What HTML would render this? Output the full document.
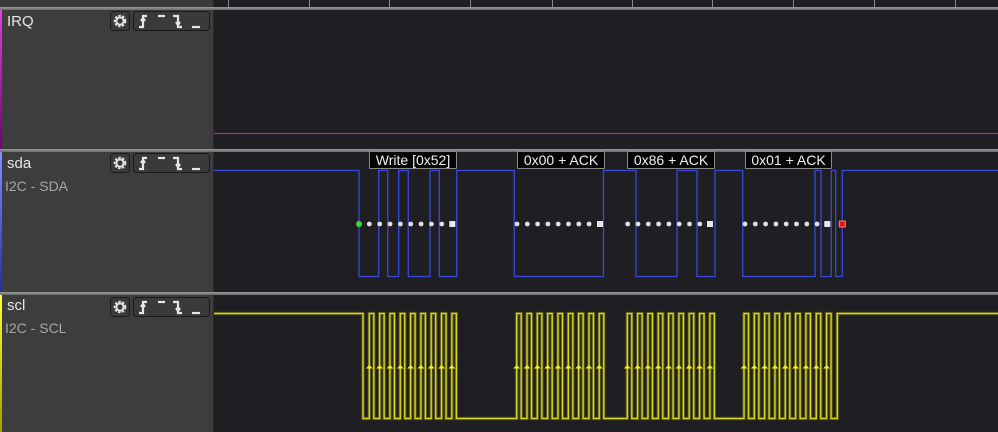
<!DOCTYPE html>
<html><head><style>
body{margin:0;width:998px;height:432px;overflow:hidden;background:#1f1f23;font-family:"Liberation Sans",sans-serif;position:relative}
.lp{position:absolute;left:0;width:213px;background:#3d3d3d;border-right:1px solid #2a2a2a}
.sep{position:absolute;left:0;width:998px;height:3px;background:linear-gradient(#9a9a9a,#6a6a6a)}
.name{position:absolute;left:7px;color:#e6e6e6;font-size:15px}
.sub{position:absolute;left:5px;color:#a8a8a8;font-size:14px}
.lab{position:absolute;top:151px;height:16px;background:#050505;border:1px solid #8a8a8a;color:#f0f0f0;font-size:14px;line-height:16px;text-align:center;border-radius:1px}
</style></head><body>
<div class="lp" style="top:0;height:8px;background:#3a3a3a"></div>
<svg style="position:absolute;left:214px;top:0" width="784" height="8"><g stroke="#888" stroke-width="1">
<line x1="14.5" y1="0" x2="14.5" y2="8"/><line x1="95.5" y1="0" x2="95.5" y2="8"/><line x1="175.5" y1="0" x2="175.5" y2="8"/><line x1="256.5" y1="0" x2="256.5" y2="8"/><line x1="338.5" y1="0" x2="338.5" y2="8"/><line x1="418.5" y1="0" x2="418.5" y2="8"/><line x1="498.5" y1="0" x2="498.5" y2="8"/><line x1="579.5" y1="0" x2="579.5" y2="8"/><line x1="660.5" y1="0" x2="660.5" y2="8"/><line x1="741.5" y1="0" x2="741.5" y2="8"/></g></svg>
<div class="sep" style="top:7px"></div>
<div class="lp" style="top:10px;height:139px"></div>
<div style="position:absolute;left:0;top:10px;width:2px;height:139px;background:linear-gradient(#e040e0,#700070)"></div>
<div class="sep" style="top:149px"></div>
<div class="lp" style="top:152px;height:140px"></div>
<div style="position:absolute;left:0;top:152px;width:2px;height:140px;background:linear-gradient(#8090ff,#2030a0)"></div>
<div class="sep" style="top:292px"></div>
<div class="lp" style="top:295px;height:137px"></div>
<div style="position:absolute;left:0;top:295px;width:2px;height:137px;background:linear-gradient(#ffff40,#a0a000)"></div>

<div class="name" style="top:13px">IRQ</div>
<div class="name" style="top:155px">sda</div>
<div class="sub" style="top:178px">I2C - SDA</div>
<div class="name" style="top:297px">scl</div>
<div class="sub" style="top:320px">I2C - SCL</div>

<svg width="0" height="0" style="position:absolute"><defs>
<g id="bt">
<rect x="0.5" y="0.5" width="19" height="19" rx="3" fill="#3a3a3a" stroke="#1a1a1a"/>
<circle cx="10" cy="10" r="4.8" fill="none" stroke="#e0e0e0" stroke-width="3" stroke-dasharray="2.2 1.3"/>
<circle cx="10" cy="10" r="3.6" fill="none" stroke="#e0e0e0" stroke-width="2"/>
<rect x="23.5" y="0.5" width="76" height="19" rx="3" fill="#3a3a3a" stroke="#1a1a1a"/>
<g fill="none" stroke="#e6e6e6" stroke-width="2.2">
<path d="M29 16h4V5h4M31 10l2-3 2 3"/>
<path d="M48 5h7"/>
<path d="M63 5h5v11h4M66 11l2 3 2-3"/>
<path d="M82 16h8"/></g></g></defs></svg>
<svg style="position:absolute;left:110px;top:11px" width="101" height="21"><use href="#bt"/></svg>
<svg style="position:absolute;left:110px;top:153px" width="101" height="21"><use href="#bt"/></svg>
<svg style="position:absolute;left:110px;top:297px" width="101" height="21"><use href="#bt"/></svg>

<svg style="position:absolute;left:0;top:0" width="998" height="432">
<line x1="214" y1="133.5" x2="998" y2="133.5" stroke="#a030a0" stroke-width="1.2"/>
<polyline fill="none" stroke="#3848d8" stroke-width="1.3" points="214,170.5 359,170.5 359,276.5 378.7,276.5 378.7,170.5 387.7,170.5 387.7,276.5 398.7,276.5 398.7,170.5 408.3,170.5 408.3,276.5 430,276.5 430,170.5 439.3,170.5 439.3,276.5 456.7,276.5 456.7,170.5 514.3,170.5 514.3,276.5 603.5,276.5 603.5,170.5 636,170.5 636,276.5 677,276.5 677,170.5 697,170.5 697,276.5 715,276.5 715,170.5 742.7,170.5 742.7,276.5 815,276.5 815,170.5 821,170.5 821,276.5 831.3,276.5 831.3,170.5 835.7,170.5 835.7,276.5 842.3,276.5 842.3,170.5 998,170.5"/>
<g id="dots" fill="#e0e0e0"></g>
<g id="scl"></g>
</svg>
<script>
var ns="http://www.w3.org/2000/svg",d=document.getElementById('dots');
function c(x,col){var e=document.createElementNS(ns,'circle');e.setAttribute('cx',x);e.setAttribute('cy',224);e.setAttribute('r',col?3:2.4);if(col)e.setAttribute('fill',col);d.appendChild(e);}
function s(x,col){var e=document.createElementNS(ns,'rect');e.setAttribute('x',x-3);e.setAttribute('y',221);e.setAttribute('width',6);e.setAttribute('height',6);e.setAttribute('fill',col||'#e8e8e8');if(col)e.setAttribute('stroke','#ff8080');d.appendChild(e);}
c(359,'#30e030');for(var i=1;i<9;i++)c(359+i*10.35);s(452.3);
[517,627.7,745].forEach(function(b,k){for(var i=0;i<8;i++)c(b+i*10.3);s([600,710,827.3][k]);});
s(842.3,'#f01010');
var g=document.getElementById('scl'),pts=[[214,313.5],[363,313.5],[363,418.5]],arr=[];
[369.3,516.7,627.3,744].forEach(function(b){for(var i=0;i<9;i++){var r=b+i*10.32;pts.push([r,418.5],[r,313.5],[r+4.5,313.5],[r+4.5,418.5]);arr.push(r);}});
pts.push([837.3,418.5],[837.3,313.5],[998,313.5]);
var p=pts.map(function(a){return a.join(',')}).join(' ');
['#5a5a18',3.2,'#d8d820',1.3].reduce(function(a,v,i,A){if(i%2)return;var e=document.createElementNS(ns,'polyline');e.setAttribute('points',p);e.setAttribute('fill','none');e.setAttribute('stroke',A[i]);e.setAttribute('stroke-width',A[i+1]);g.appendChild(e);},0);
arr.forEach(function(x){var e=document.createElementNS(ns,'path');e.setAttribute('d','M'+(x-3.5)+' 368.5h7l-3.5-3.5z');e.setAttribute('fill','#f0f020');g.appendChild(e);});
</script>
<div class="lab" style="left:369px;width:86px">Write [0x52]</div>
<div class="lab" style="left:517px;width:86px">0x00 + ACK</div>
<div class="lab" style="left:627px;width:86px">0x86 + ACK</div>
<div class="lab" style="left:745px;width:85px">0x01 + ACK</div>
</body></html>
